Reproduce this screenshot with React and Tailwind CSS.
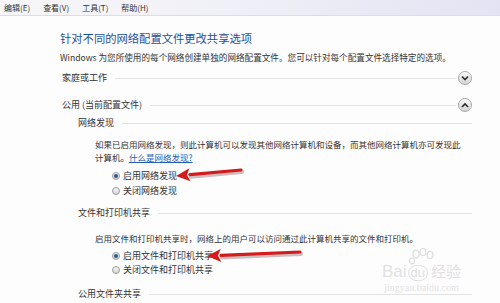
import React from "react";

const font = { fontFamily: '"Noto Sans CJK SC", "Noto Sans", sans-serif' };

const Chevron = ({ up }) => (
  <div className="w-[14px] h-[14px] rounded-full border border-[#a9a9a9] bg-gradient-to-b from-[#fbfbfb] to-[#d4d4d4] flex items-center justify-center shrink-0">
    <svg width="8" height="6" viewBox="0 0 8 6">
      <polyline
        points={up ? "1,5 4,2 7,5" : "1,1.5 4,4.5 7,1.5"}
        fill="none"
        stroke="#2b2b2b"
        strokeWidth="1.6"
      />
    </svg>
  </div>
);

const Heading = ({ text, chevron, sub }) => (
  <div className={`flex items-center h-[14px] ${sub ? "pl-[18px]" : "pl-[2px]"}`}>
    <span className="text-[9px] text-[#333] whitespace-nowrap">{text}</span>
    <div className={`flex-1 h-px bg-[#e3e3e3] ml-[8px] ${chevron ? "mr-[2px]" : ""}`}></div>
    {chevron && <Chevron up={chevron === "up"} />}
  </div>
);

const Radio = ({ checked, label }) => (
  <div className="flex items-center h-[14px] pl-[52px] gap-[3px]">
    <div className="w-[8px] h-[8px] rounded-full border border-[#9a9a9a] bg-gradient-to-b from-[#f4f4f4] to-[#d8d8d8] flex items-center justify-center">
      {checked && <div className="w-[4px] h-[4px] rounded-full bg-[#2a5a8a]"></div>}
    </div>
    <span className="text-[9px] text-[#333] whitespace-nowrap">{label}</span>
  </div>
);

const Arrow = ({ x1, y1, x2, y2 }) => {
  // tip at x1,y1 ; tail at x2,y2
  const dx = x2 - x1;
  const dy = y2 - y1;
  const len = Math.sqrt(dx * dx + dy * dy);
  const ux = dx / len;
  const uy = dy / len;
  const bx = x1 + ux * 14;
  const by = y1 + uy * 14;
  const px = -uy * 6.5;
  const py = ux * 6.5;
  return (
    <g>
      <line x1={bx + 1} y1={by + 2} x2={x2 + 1} y2={y2 + 2} stroke="rgba(60,0,0,0.25)" strokeWidth="4" strokeLinecap="round" />
      <line x1={bx} y1={by} x2={x2} y2={y2} stroke="#d41c1c" strokeWidth="3.2" strokeLinecap="round" />
      <polygon
        points={`${x1},${y1} ${bx + px},${by + py} ${x1 + ux * 11},${y1 + uy * 11} ${bx - px},${by - py}`}
        fill="#d41c1c"
      />
    </g>
  );
};

export default function App() {
  return (
    <div className="relative w-[500px] h-[303px] overflow-hidden bg-[#fefdfe]" style={font}>
      {/* menu bar */}
      <div className="h-[16px] flex items-center gap-[13px] pl-[4px] bg-gradient-to-r from-[#f7f7f9] via-[#efeff7] to-[#e3e3f3] border-b border-[#dcdcea]">
        <span className="text-[8px] text-[#333]">编辑(E)</span>
        <span className="text-[8px] text-[#333]">查看(V)</span>
        <span className="text-[8px] text-[#333]">工具(T)</span>
        <span className="text-[8px] text-[#333]">帮助(H)</span>
      </div>

      <div className="pl-[60px] w-[472px] flex flex-col">
        <div className="mt-[14px] h-[16px] flex items-center">
          <span className="text-[11.3px] text-[#1e4f9c] whitespace-nowrap">针对不同的网络配置文件更改共享选项</span>
        </div>
        <div className="mt-[4px] h-[14px] flex items-center">
          <span className="text-[8.6px] text-[#333] whitespace-nowrap">
            Windows 为您所使用的每个网络创建单独的网络配置文件。您可以针对每个配置文件选择特定的选项。
          </span>
        </div>
        <div className="mt-[7px]">
          <Heading text="家庭或工作" chevron="down" />
        </div>
        <div className="mt-[13px]">
          <Heading text="公用 (当前配置文件)" chevron="up" />
        </div>
        <div className="mt-[4px]">
          <Heading text="网络发现" sub />
        </div>
        <div className="mt-[8px] pl-[35px] text-[8.5px] leading-[13px] text-[#333]">
          <div className="whitespace-nowrap">如果已启用网络发现，则此计算机可以发现其他网络计算机和设备，而其他网络计算机亦可发现此</div>
          <div className="whitespace-nowrap">
            计算机。<span className="text-[#1f5fb4] underline">什么是网络发现?</span>
          </div>
        </div>
        <div className="mt-[5px]">
          <Radio checked label="启用网络发现" />
          <div className="mt-[1px]">
            <Radio label="关闭网络发现" />
          </div>
        </div>
        <div className="mt-[8px]">
          <Heading text="文件和打印机共享" sub />
        </div>
        <div className="mt-[12px] pl-[35px] text-[8.5px] leading-[13px] text-[#333] whitespace-nowrap">
          启用文件和打印机共享时，网络上的用户可以访问通过此计算机共享的文件和打印机。
        </div>
        <div className="mt-[4px]">
          <Radio checked label="启用文件和打印机共享" />
          <Radio label="关闭文件和打印机共享" />
        </div>
        <div className="mt-[10px]">
          <Heading text="公用文件夹共享" sub />
        </div>
      </div>

      {/* annotations */}
      <svg className="absolute left-0 top-0" width="500" height="303">
        <Arrow x1={176} y1={176} x2={241} y2={170} />
        <Arrow x1={207} y1={256} x2={300} y2={252} />
      </svg>

      {/* watermark */}
      <div className="absolute left-[382px] top-[248px] flex flex-col items-center opacity-60">
        <svg width="30" height="18" viewBox="0 0 30 18">
          <g fill="none" stroke="#c8c8c8" strokeWidth="1.2">
            <ellipse cx="9" cy="6" rx="3" ry="4" />
            <ellipse cx="16" cy="4" rx="3" ry="3.5" />
            <ellipse cx="23" cy="7" rx="3" ry="3.5" />
            <ellipse cx="5" cy="13" rx="2.5" ry="3" />
          </g>
        </svg>
        <div className="flex items-baseline -mt-[4px] text-[#cfcfcf]">
          <span className="text-[17px] leading-[17px]" style={{ fontFamily: '"Liberation Sans", sans-serif' }}>Bai</span>
          <span className="text-[13px] leading-[14px] mx-[1px] px-[2px] rounded-full border border-[#cfcfcf]" style={{ fontFamily: '"Liberation Sans", sans-serif' }}>du</span>
          <span className="text-[15px] leading-[17px] ml-[2px]">经验</span>
        </div>
        <span className="text-[10px] text-[#d0d0d0] leading-[12px] mt-[1px]" style={{ fontFamily: '"Liberation Serif", serif' }}>jingyan.baidu.com</span>
      </div>
    </div>
  );
}
